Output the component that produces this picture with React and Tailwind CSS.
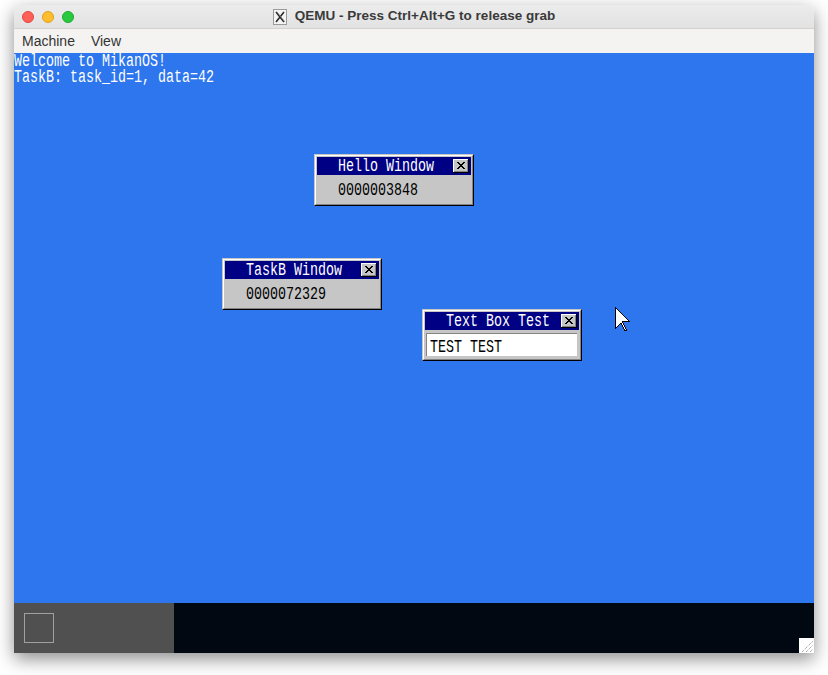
import React from "react";

// pixel maps taken from the MikanOS sources
const CLOSE_BUTTON = [
  "...............@",
  ".:::::::::::::$@",
  ".:::::::::::::$@",
  ".:::@@::::@@::$@",
  ".::::@@::@@:::$@",
  ".:::::@@@@::::$@",
  ".::::::@@:::::$@",
  ".:::::@@@@::::$@",
  ".::::@@::@@:::$@",
  ".:::@@::::@@::$@",
  ".:::::::::::::$@",
  ".:::::::::::::$@",
  ".$$$$$$$$$$$$$$@",
  "@@@@@@@@@@@@@@@@",
];

const CURSOR = [
  "@              ",
  "@@             ",
  "@.@            ",
  "@..@           ",
  "@...@          ",
  "@....@         ",
  "@.....@        ",
  "@......@       ",
  "@.......@      ",
  "@........@     ",
  "@.........@    ",
  "@..........@   ",
  "@...........@  ",
  "@............@ ",
  "@......@@@@@@@@",
  "@......@       ",
  "@....@@.@      ",
  "@...@ @.@      ",
  "@..@   @.@     ",
  "@.@    @.@     ",
  "@@      @.@    ",
  "@       @.@    ",
  "         @.@   ",
  "         @@@   ",
];

const COLORS = { "@": "#000000", $: "#848484", ":": "#c6c6c6", ".": "#ffffff" };

const PixelArt = ({ rows, className = "" }) => {
  const w = rows[0].length;
  const h = rows.length;
  const rects = [];
  rows.forEach((row, y) =>
    [...row].forEach((c, x) => {
      if (COLORS[c]) {
        rects.push(
          <rect key={`${x}-${y}`} x={x} y={y} width="1" height="1" fill={COLORS[c]} />
        );
      }
    })
  );
  return (
    <svg
      width={w}
      height={h}
      viewBox={`0 0 ${w} ${h}`}
      shapeRendering="crispEdges"
      className={className}
    >
      {rects}
    </svg>
  );
};

// 8x16 cell text, like the hankaku font
const Mono = ({ children, className = "" }) => (
  <div
    className={`h-4 origin-top-left scale-x-[0.833] scale-y-[1.1] whitespace-pre font-['Liberation_Mono',monospace] text-[16px] leading-4 ${className}`}
  >
    {children}
  </div>
);

const MikanWindow = ({ title, className, children }) => (
  <div
    className={`absolute h-[52px] w-[160px] border border-t-[#c6c6c6] border-l-[#c6c6c6] border-r-black border-b-black ${className}`}
  >
    <div className="flex h-full flex-col border border-t-white border-l-white border-r-[#848484] border-b-[#848484] bg-[#c6c6c6] p-px">
      <div className="relative h-[18px] shrink-0 bg-[#000084]">
        <div className="pl-[21px] pt-px">
          <Mono className="text-white">{title}</Mono>
        </div>
        <PixelArt rows={CLOSE_BUTTON} className="absolute left-[136px] top-[2px]" />
      </div>
      {children}
    </div>
  </div>
);

const Counter = ({ value }) => (
  <div className="pl-[21px] pt-[7px]">
    <Mono className="text-black">{value}</Mono>
  </div>
);

const Desktop = () => (
  <div className="relative h-[550px] overflow-hidden bg-[#2d76ed]">
    <Mono className="text-white">Welcome to MikanOS!</Mono>
    <Mono className="text-white">TaskB: task_id=1, data=42</Mono>

    <MikanWindow title="Hello Window" className="left-[300px] top-[101px]">
      <Counter value="0000003848" />
    </MikanWindow>

    <MikanWindow title="TaskB Window" className="left-[208px] top-[205px]">
      <Counter value="0000072329" />
    </MikanWindow>

    <MikanWindow title="Text Box Test" className="left-[408px] top-[256px]">
      <div className="ml-px mt-[3px] w-[151px] border-t border-l border-[#848484]">
        <div className="h-[22px] w-[150px] bg-white pl-[3px] pt-[5px]">
          <Mono className="text-black">TEST TEST</Mono>
        </div>
      </div>
    </MikanWindow>

    <PixelArt rows={CURSOR} className="absolute left-[601px] top-[254px]" />
  </div>
);

const Taskbar = () => (
  <div className="flex h-[50px]">
    <div className="w-[160px] bg-[#505050] p-[10px]">
      <div className="h-[30px] w-[30px] border border-[#a0a0a0]" />
    </div>
    <div className="flex-1 bg-[#010811]" />
  </div>
);

const XIcon = () => (
  <svg width="14" height="16" viewBox="0 0 14 16">
    <rect x="0.5" y="0.5" width="13" height="15" fill="#f4f4f4" stroke="#9a9a9a" />
    <path d="M3 3 L11 13 M11 3 L3 13" stroke="#2a2a2a" strokeWidth="1.6" />
    <path d="M4 3 L12 13" stroke="#888" strokeWidth="0.7" />
  </svg>
);

const App = () => (
  <div className="min-h-screen bg-white pl-[14px] pt-[5px] font-['Liberation_Sans',Arial,sans-serif]">
    <div className="relative w-[800px] overflow-hidden rounded-t-[6px] shadow-[0_6px_18px_rgba(0,0,0,0.45)]">
      <div className="relative flex h-[24px] items-center border-b border-[#d2d2d2] bg-gradient-to-b from-[#ececec] to-[#e2e2e2] pl-[8px]">
        <div className="flex gap-[8px]">
          <span className="h-[12px] w-[12px] rounded-full border border-[#e2463f] bg-[#fe5f57]" />
          <span className="h-[12px] w-[12px] rounded-full border border-[#e1a116] bg-[#febc2e]" />
          <span className="h-[12px] w-[12px] rounded-full border border-[#1aab29] bg-[#28c840]" />
        </div>
        <div className="absolute inset-0 flex items-center justify-center gap-[8px]">
          <XIcon />
          <span className="text-[13.5px] font-bold text-[#3a3a3a]">
            QEMU - Press Ctrl+Alt+G to release grab
          </span>
        </div>
      </div>
      <div className="flex h-[24px] items-center gap-[16px] bg-[#f4f3f2] pl-[8px] text-[14px] text-[#333]">
        <span>Machine</span>
        <span>View</span>
      </div>
      <Desktop />
      <Taskbar />
      <div className="absolute bottom-0 right-0 h-[15px] w-[15px] bg-white">
        <svg width="15" height="15" viewBox="0 0 15 15">
          <path d="M3 14 L14 3 M7 14 L14 7 M11 14 L14 11" stroke="#8a8a8a" strokeWidth="1" strokeDasharray="1 1" />
        </svg>
      </div>
    </div>
  </div>
);

export default App;
